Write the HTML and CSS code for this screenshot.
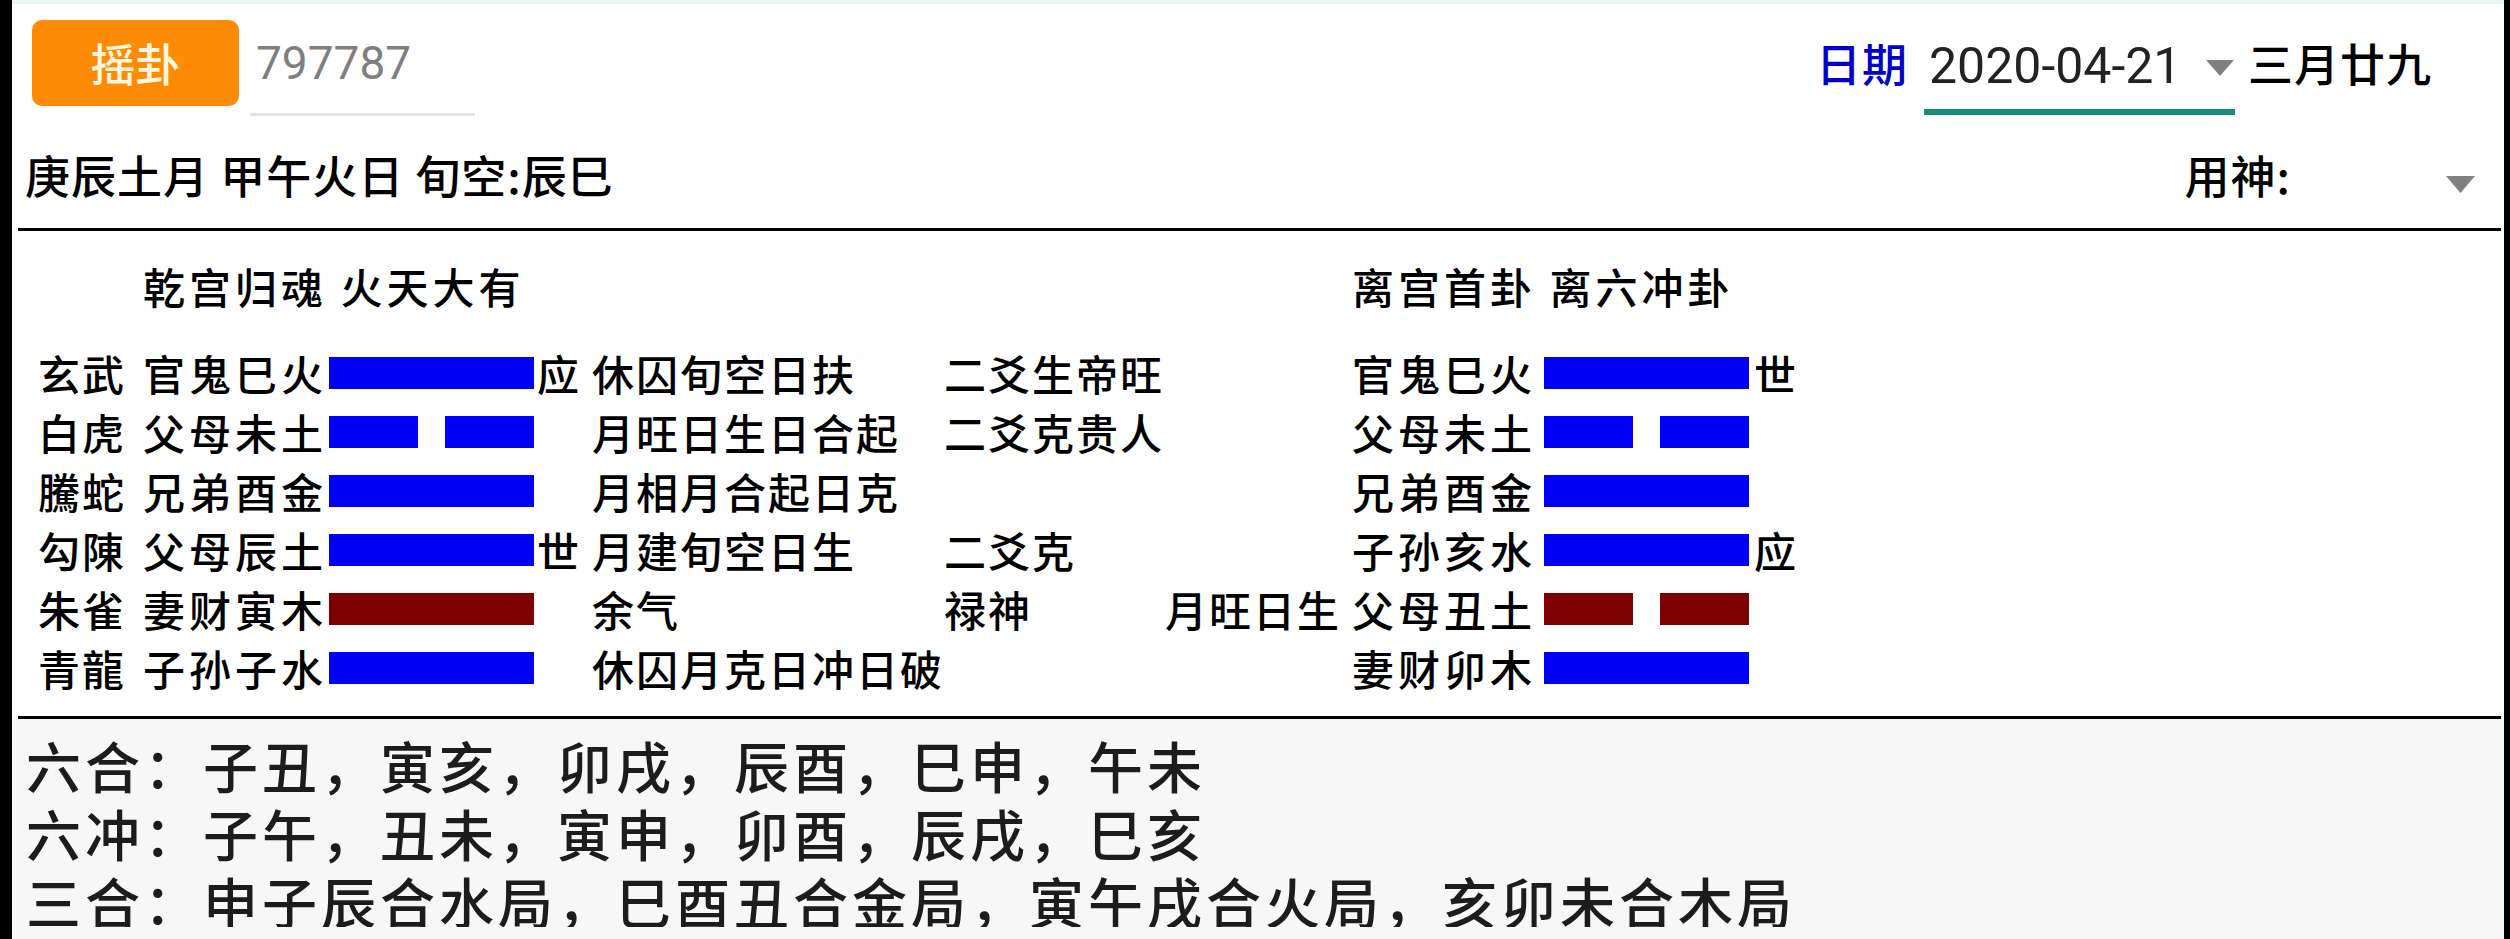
FILE: index.html
```html
<!DOCTYPE html>
<html lang="zh-CN">
<head>
<meta charset="utf-8">
<title>摇卦</title>
<link rel="stylesheet" href="styles.css">
</head>
<body>
<div class="screen">
  <div class="topstrip"></div>
  <header class="bar1">
    <button class="shake">摇卦</button>
    <div class="code">797787</div>
    <div class="datebox">
      <span class="datelabel">日期</span>
      <div class="spinner">
        <span class="date">2020-04-21</span>
        <svg class="tri" viewBox="0 0 28 16" width="28" height="16"><path d="M0 0H28L14 16Z" fill="#808080"/></svg>
      </div>
      <span class="lunar">三月廿九</span>
    </div>
  </header>
  <div class="bar2">
    <span class="ganzhi">庚辰土月 甲午火日 旬空:辰巳</span>
    <div class="yongshen">
      <span class="yslabel">用神:</span>
      <div class="ysel">
        <svg class="tri2" viewBox="0 0 29 17" width="29" height="17"><path d="M0 0H29L14.5 17Z" fill="#808080"/></svg>
      </div>
    </div>
  </div>
  <section class="gua">
    <div class="grid">
      <div></div><div class="title span4">乾宫归魂 火天大有</div><div class="span2"></div><div class="title span3">离宫首卦 离六冲卦</div>

      <div class="god">玄武</div><div class="name">官鬼巳火</div><div class="yao yang"></div><div class="sy">应</div><div class="st">休囚旬空日扶</div><div class="nt">二爻生帝旺</div><div class="ex"></div><div class="name">官鬼巳火</div><div class="yao yang"></div><div class="sy2">世</div>

      <div class="god">白虎</div><div class="name">父母未土</div><div class="yao yin"><i></i><i></i></div><div class="sy"></div><div class="st">月旺日生日合起</div><div class="nt">二爻克贵人</div><div class="ex"></div><div class="name">父母未土</div><div class="yao yin"><i></i><i></i></div><div class="sy2"></div>

      <div class="god">騰蛇</div><div class="name">兄弟酉金</div><div class="yao yang"></div><div class="sy"></div><div class="st">月相月合起日克</div><div class="nt"></div><div class="ex"></div><div class="name">兄弟酉金</div><div class="yao yang"></div><div class="sy2"></div>

      <div class="god">勾陳</div><div class="name">父母辰土</div><div class="yao yang"></div><div class="sy">世</div><div class="st">月建旬空日生</div><div class="nt">二爻克</div><div class="ex"></div><div class="name">子孙亥水</div><div class="yao yang"></div><div class="sy2">应</div>

      <div class="god">朱雀</div><div class="name">妻财寅木</div><div class="yao yang red"></div><div class="sy"></div><div class="st">余气</div><div class="nt">禄神</div><div class="ex">月旺日生</div><div class="name">父母丑土</div><div class="yao yin red"><i></i><i></i></div><div class="sy2"></div>

      <div class="god">青龍</div><div class="name">子孙子水</div><div class="yao yang"></div><div class="sy"></div><div class="st">休囚月克日冲日破</div><div class="nt"></div><div class="ex"></div><div class="name">妻财卯木</div><div class="yao yang"></div><div class="sy2"></div>
    </div>
  </section>
  <section class="notes">
    <div class="notes-inner">
      <p>六合：子丑，寅亥，卯戌，辰酉，巳申，午未</p>
      <p>六冲：子午，丑未，寅申，卯酉，辰戌，巳亥</p>
      <p>三合：申子辰合水局，巳酉丑合金局，寅午戌合火局，亥卯未合木局</p>
    </div>
  </section>
</div>
</body>
</html>
```

FILE: styles.css
```css
html, body {
  margin: 0;
  padding: 0;
  background: #000;
}

body {
  font-family: "Noto Sans CJK SC", "Noto Sans", sans-serif;
  font-weight: 500;
  color: #000;
}

.screen {
  margin: 0 6px 0 12px;
  height: 939px;
  background: #fff;
  padding: 0 3px 0 6px;
  box-sizing: border-box;
  display: flex;
  flex-direction: column;
  overflow: hidden;
}

.topstrip {
  height: 4px;
  background: #e8f7f4;
  margin: 0 -3px 0 -6px;
}

/* header row 1 */
.bar1 {
  display: flex;
  align-items: flex-start;
  padding: 16px 0 0 14px;
}

.shake {
  width: 207px;
  height: 86px;
  border: none;
  border-radius: 10px;
  background: #fd8b06;
  color: #fff6df;
  font-family: "Noto Sans CJK SC", sans-serif;
  font-weight: 500;
  font-size: 45px;
  line-height: 86px;
  padding: 0;
}

.code {
  margin-left: 11px;
  width: 219px;
  height: 86px;
  line-height: 86px;
  padding: 0 0 7px 6px;
  border-bottom: 3px solid #e4e4e4;
  font-family: Roboto, "Liberation Sans", sans-serif;
  font-weight: 400;
  font-size: 46px;
  color: #7f7f7f;
}

.datebox {
  margin-left: auto;
  margin-right: 69px;
  display: flex;
  align-items: flex-start;
}

.datelabel {
  font-size: 45px;
  line-height: 86px;
  letter-spacing: 1px;
  color: #0000c8;
  margin-right: 16px;
}

.spinner {
  box-sizing: border-box;
  width: 311px;
  height: 92px;
  margin-top: 3px;
  padding-left: 5px;
  border-bottom: 6px solid #1a8f7e;
  display: flex;
  align-items: center;
}

.date {
  font-family: Roboto, "Liberation Sans", sans-serif;
  font-weight: 400;
  font-size: 50px;
  line-height: 86px;
  color: #222;
}

.tri {
  margin-left: auto;
  margin-right: 1px;
  margin-top: 4px;
}

.lunar {
  margin-left: 13px;
  font-size: 45px;
  line-height: 86px;
  letter-spacing: 1px;
}

/* header row 2 */
.bar2 {
  display: flex;
  align-items: center;
  height: 60px;
  padding: 29px 26px 23px 7px;
}

.ganzhi {
  font-size: 45px;
  line-height: 60px;
  letter-spacing: 1px;
}

.yongshen {
  margin-left: auto;
  display: flex;
  align-items: center;
}

.yslabel {
  font-size: 45px;
  line-height: 60px;
  letter-spacing: 1px;
}

.ysel {
  width: 184px;
  height: 60px;
  display: flex;
  justify-content: flex-end;
  align-items: center;
}

.tri2 {
  margin-top: 19px;
}

/* hexagram area */
.gua {
  border-top: 3px solid #000;
  border-bottom: 3px solid #000;
  padding: 25px 0 19px 20px;
}

.grid {
  display: grid;
  grid-template-columns: 105px 186px 205px 58px 352px 216px 192px 192px 205px auto;
  grid-template-rows: 87px repeat(6, 59px);
  align-items: center;
  font-size: 42px;
  line-height: 59px;
  letter-spacing: 2px;
  white-space: nowrap;
}

.span2 { grid-column: span 2; }
.span3 { grid-column: span 3; }
.span4 { grid-column: span 4; }

.title {
  align-self: start;
  letter-spacing: 4px;
}

.name { letter-spacing: 4px; }

.sy { padding-left: 3px; }

.ex {
  text-align: right;
  padding-right: 11px;
}

.sy2 { padding-left: 5px; }

.yao {
  height: 32px;
  --c: #0000f4;
}

.yao.red { --c: #7e0000; }

.yang { background: var(--c); }

.yin {
  display: flex;
  justify-content: space-between;
}

.yin i {
  width: 89px;
  height: 32px;
  background: var(--c);
}

/* bottom notes */
.notes {
  flex: 1;
  background: #f7f7f7;
  margin: 0 -3px 0 -6px;
  padding: 11px 0 0 14px;
}

.notes-inner {
  height: 197px;
  overflow: hidden;
  font-size: 55px;
  line-height: 68px;
  letter-spacing: 4px;
  color: #1c1c1c;
  white-space: nowrap;
}

.notes-inner p {
  margin: 0;
}
```
